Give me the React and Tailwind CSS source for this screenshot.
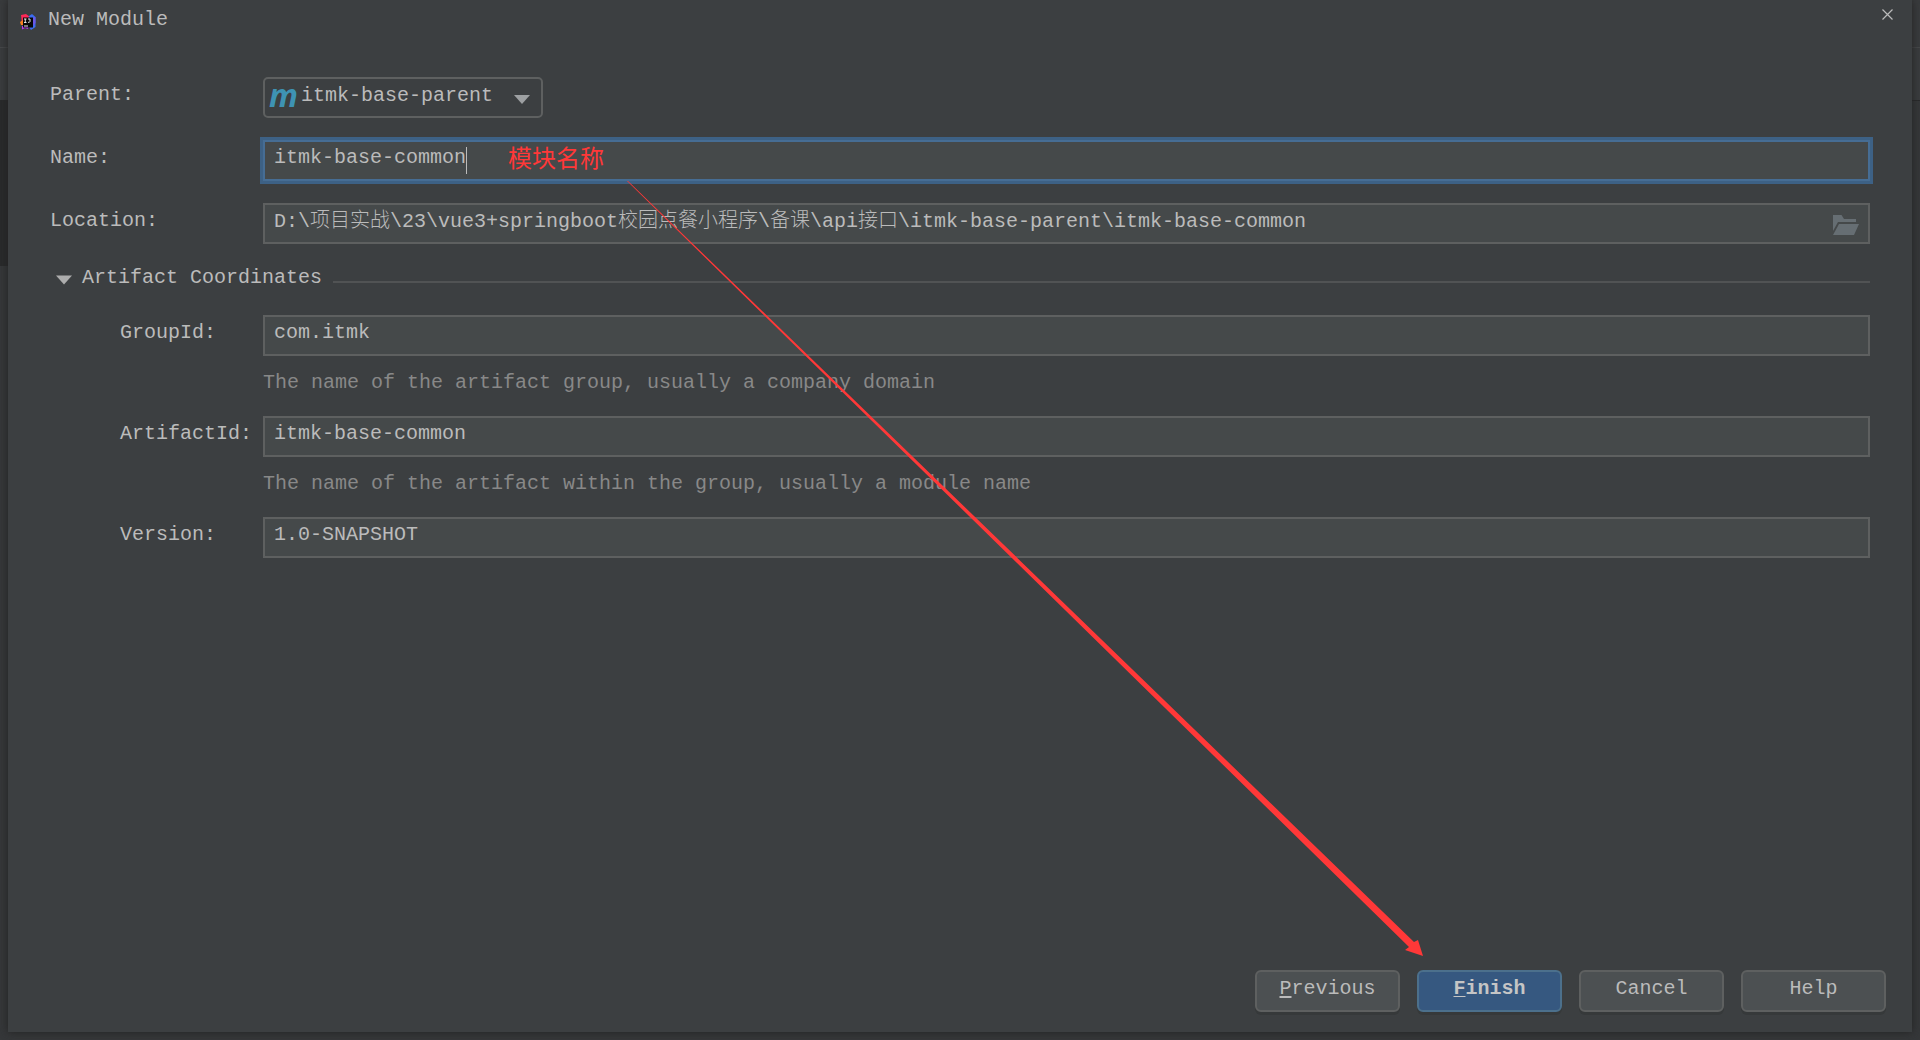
import React from "react";

const box =
  "h-[41px] w-full min-w-0 rounded-none border-2 border-[#5e6060] bg-[#45494a] pl-[9px] pr-2 text-[20px] leading-6 text-[#bbbbbb] outline-none";
const label = "pb-[5px] text-[20px] leading-6";
const button =
  "h-[42px] w-[145px] rounded-[6px] border-2 pb-1 text-[20px] leading-6 shadow-[0_3px_0_#36393a]";
const plainButton = "border-[#5e6060] bg-[#4c5052] text-[#bbbbbb]";

function IdeaLogo() {
  return (
    <svg className="h-4 w-4 shrink-0" viewBox="0 0 16 16" aria-hidden="true">
      <path d="M1 1 6 0 10 3 7 12 2 10Z" fill="#fe2857" />
      <path d="M9 2 12 0 15.500 3 15.500 13 11 16 7 10Z" fill="#3b6cf0" />
      <path d="M12 4 15.500 3 15.500 9 13 12Z" fill="#6b57e8" />
      <path d="M0 8 3 6 4 11 1 11Z" fill="#fc801d" />
      <path d="M2 12 9 11 8 15 5 14 2 15.500Z" fill="#b83af0" />
      <path d="M3 3.500H13V13.500H3Z" fill="#080808" />
      <path d="M4 5H6.500M5.250 5V8.500M4 8.500H6.500M8 5H10V7.500Q10 8.500 8 8.300" fill="none" stroke="#e8e8e8" strokeWidth="1" />
      <path d="M4 12H8" stroke="#e8e8e8" strokeWidth="1" />
    </svg>
  );
}

function Triangle({ className }) {
  return (
    <svg className={className} viewBox="0 0 16 9" aria-hidden="true">
      <path d="M0 0H16L8 9Z" fill="currentColor" />
    </svg>
  );
}

function Field({ id, text, hint, value }) {
  return (
    <div className="grid grid-cols-[143px_1fr] items-center">
      <label htmlFor={id} className={label}>{text}</label>
      <input id={id} className={box + " pb-[6px]"} defaultValue={value} />
      {hint && <p className="col-start-2 mt-[15px] h-[45px] text-[20px] leading-6 text-[#888888]">{hint}</p>}
    </div>
  );
}

export default function App() {
  return (
    <div className="relative flex min-h-screen flex-col bg-[linear-gradient(#393b3d_0_47px,#46484a_47px_48px,#3a3c3e_48px_100px,#292a2b_100px_266px,#353739_266px)] px-2 pb-2 font-['Liberation_Mono','Noto_Sans_CJK_SC',monospace] text-[#bbbbbb]">
      <span className="absolute right-0 top-[101px] h-[165px] w-2 bg-[#353739]" />
      <main className="relative flex flex-1 flex-col bg-[#3c3f41] shadow-[0_0_8px_#222222]">
        <header className="flex h-[77px] items-start justify-between pl-3 pr-[19px]">
          <div className="flex gap-3 pt-2">
            <div className="pt-[6px]"><IdeaLogo /></div>
            <h1 className="text-[20px] leading-6">New Module</h1>
          </div>
          <button type="button" aria-label="Close" className="mt-[9px]">
            <svg className="h-[11px] w-[11px]" viewBox="0 0 11 11" aria-hidden="true">
              <path d="M.5 .5 10.500 10.500M10.500 .5 .5 10.500" stroke="#bbbbbb" strokeWidth="1.200" />
            </svg>
          </button>
        </header>

        <form className="flex flex-1 flex-col pl-[42px]" onSubmit={(e) => e.preventDefault()}>
          <div className="mr-[42px] grid grid-cols-[213px_1fr] items-center gap-y-[22px]">
            <label htmlFor="parent" className={label}>Parent:</label>
            <div className="relative flex h-[41px] w-[280px] items-center rounded-[5px] border-2 border-[#5e6060] pl-[4px]">
              <span aria-hidden="true" className="w-[28px] pb-[6px] font-['Open_Sans',sans-serif] text-[32px] font-bold italic leading-8 text-[#3e93b3]">
                m
              </span>
              <select
                id="parent"
                className="h-full flex-1 appearance-none bg-transparent pb-1 pl-1 text-[20px] leading-6 text-[#bbbbbb] outline-none"
              >
                <option>itmk-base-parent</option>
              </select>
              <Triangle className="pointer-events-none absolute right-[11px] top-4 h-[9px] w-4 text-[#9da0a2]" />
            </div>

            <label htmlFor="name" className={label}>Name:</label>
            <div className="relative">
              <input
                id="name"
                className="h-[41px] w-full border-2 border-[#466d94] bg-[#45494a] pb-[6px] pl-[9px] pr-2 text-[20px] leading-6 text-[#bbbbbb] shadow-[0_0_0_3px_#3d6185] outline-none"
                defaultValue="itmk-base-common"
              />
              <span className="absolute left-[203px] top-[7px] h-[27px] w-px bg-[#bbbbbb]" />
              <span className="absolute left-[245px] top-[5px] text-[24px] leading-8 text-[#ff3838]">模块名称</span>
            </div>

            <label htmlFor="location" className={label}>Location:</label>
            <div className="relative">
              <input
                id="location"
                className={box + " pb-[10px] font-light"}
                defaultValue="D:\项目实战\23\vue3+springboot校园点餐小程序\备课\api接口\itmk-base-parent\itmk-base-common"
              />
              <button type="button" aria-label="Browse" className="absolute right-[11px] top-3">
                <svg className="h-5 w-[26px]" viewBox="0 0 26 20" aria-hidden="true">
                  <path d="M0 0H8.500L11 4H23V7H5L0 16Z" fill="#666e73" />
                  <path d="M6 9H26L21 20H0Z" fill="#666e73" />
                </svg>
              </button>
            </div>
          </div>

          <section className="mr-[42px]">
            <h2 className="mb-[25px] mt-[22px] flex h-6 items-center">
              <button type="button" aria-expanded="true" className="flex items-center gap-[10px] pl-[6px] text-[20px] leading-6">
                <Triangle className="mt-1 h-[10px] w-4 text-[#adadad]" />
                Artifact Coordinates
              </button>
              <span className="ml-[11px] mt-2 h-[2px] flex-1 bg-[#515354]" />
            </h2>
            <div className="pl-[70px]">
              <Field id="group" text="GroupId:" value="com.itmk" hint="The name of the artifact group, usually a company domain" />
              <Field id="artifact" text="ArtifactId:" value="itmk-base-common" hint="The name of the artifact within the group, usually a module name" />
              <Field id="version" text="Version:" value="1.0-SNAPSHOT" />
            </div>
          </section>

          <footer className="mt-auto flex justify-end gap-[17px] pb-5 pr-[26px]">
            <button type="button" className={button + " " + plainButton}><u className="underline-offset-2">P</u>revious</button>
            <button type="submit" className={button + " border-[#4c708c] bg-[#365880] font-bold text-[#c5c5c5]"}><u className="decoration-1 underline-offset-2">F</u>inish</button>
            <button type="button" className={button + " " + plainButton}>Cancel</button>
            <button type="button" className={button + " " + plainButton}>Help</button>
          </footer>
        </form>
      </main>

      <svg className="pointer-events-none absolute left-[627px] top-[181px] h-[776px] w-[797px]" viewBox="0 0 797 776" aria-hidden="true">
        <path d="M0 0 1 0 787 761 791 759 796 775 778 769 782 766Z" fill="#ff3838" />
      </svg>
    </div>
  );
}
